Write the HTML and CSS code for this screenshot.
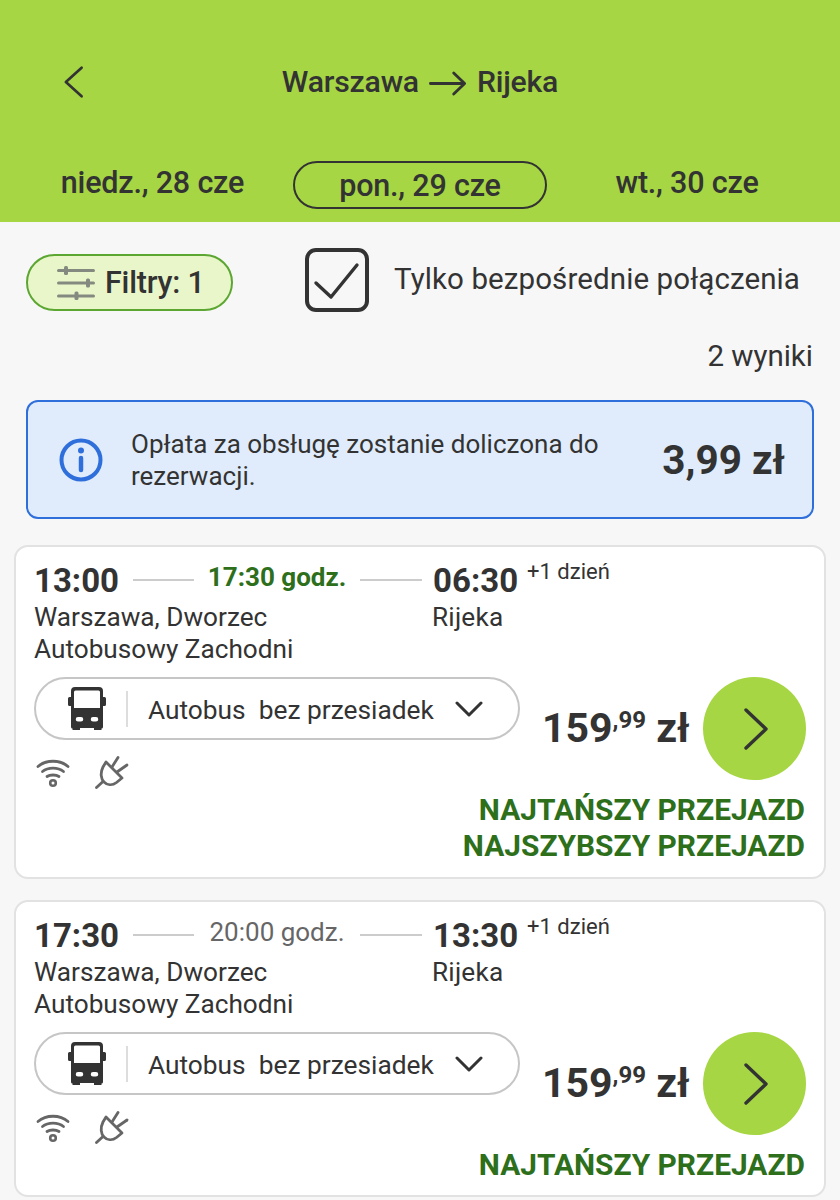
FILE: index.html
```html
<!DOCTYPE html>
<html lang="pl">
<head>
<meta charset="utf-8">
<title>Warszawa - Rijeka</title>
<link rel="stylesheet" href="styles.css">
</head>
<body>
<svg class="defs" width="0" height="0" aria-hidden="true">
  <symbol id="bus" viewBox="0 0 38 44">
    <path fill="#333" fill-rule="evenodd" d="M7 0h24a4 4 0 0 1 4 4v6h1.500a1.500 1.500 0 0 1 1.500 1.500v6a1.500 1.500 0 0 1-1.500 1.500H35v21a1.500 1.500 0 0 1-1.500 1.500V43H26v-2H12v2H4.500v-1.500A1.500 1.500 0 0 1 3 40V19H1.500A1.500 1.500 0 0 1 0 17.500v-6A1.500 1.500 0 0 1 1.500 10H3V4a4 4 0 0 1 4-4ZM7.500 3.500A1.500 1.500 0 0 0 6 5V21h26V5a1.500 1.500 0 0 0-1.500-1.500ZM10 30a2 2 0 0 0 0 4.500h3a2 2 0 0 0 0-4.500Zm15 0a2 2 0 0 0 0 4.500h3a2 2 0 0 0 0-4.500Z"/>
  </symbol>
  <symbol id="wifi" viewBox="0 0 34 32">
    <g fill="none" stroke="#666" stroke-width="2.800" stroke-linecap="round">
      <path d="M2 9.500C10 2.500 24 2.500 32 9.500"/>
      <path d="M6.500 14.500C12 10 22 10 27.500 14.500"/>
      <path d="M11 19.500C14 17.500 20 17.500 23 19.500"/>
    </g>
    <circle cx="17" cy="26" r="2.800" fill="none" stroke="#666" stroke-width="2.600"/>
  </symbol>
  <symbol id="plug" viewBox="0 0 34 34">
    <g fill="none" stroke="#666" stroke-width="2.800" stroke-linecap="round" stroke-linejoin="round">
      <path d="M1.500 31.500 8 25.500"/>
      <path d="M11 6 27 22 21.500 26.500C17 30 12 29 9 26 6 23 5 17 8 11Z"/>
      <path d="M17 11 23 1.500"/>
      <path d="M22 16 32 9"/>
    </g>
  </symbol>
  <symbol id="go" viewBox="0 0 26 44">
    <path d="M3 3 23 22 3 41" fill="none" stroke="#333" stroke-width="3.400" stroke-linecap="round" stroke-linejoin="round"/>
  </symbol>
  <symbol id="down" viewBox="0 0 28 16">
    <path d="M2 2 14 14 26 2" fill="none" stroke="#333" stroke-width="3" stroke-linecap="round" stroke-linejoin="round"/>
  </symbol>
</svg>

<header class="header">
  <div class="title-row">
    <svg class="back" viewBox="0 0 22 34" aria-hidden="true"><path d="M19.500 2 3 17 19.500 32" fill="none" stroke="#333" stroke-width="2.800" stroke-linecap="round" stroke-linejoin="round"/></svg>
    <h1 class="title"><span>Warszawa</span>
      <svg class="arrow" viewBox="0 0 40 26" aria-hidden="true"><path d="M1.500 13H37M26 2 37.500 13 26 24" fill="none" stroke="#333" stroke-width="3" stroke-linecap="round" stroke-linejoin="round"/></svg>
      <span>Rijeka</span></h1>
  </div>
  <div class="dates">
    <span class="date">niedz., 28 cze</span>
    <span class="date date-active">pon., 29 cze</span>
    <span class="date">wt., 30 cze</span>
  </div>
</header>

<main class="content">
  <div class="filters">
    <button class="filter-btn">
      <svg class="sliders" viewBox="0 0 38 34" aria-hidden="true">
        <g fill="none" stroke="#858a80" stroke-width="3" stroke-linecap="round">
          <path d="M1.500 4.500H36.500M1.500 17H36.500M1.500 30H36.500"/>
        </g>
        <g fill="#858a80"><rect x="7" y="0" width="4" height="9" rx="1.500"/><rect x="29" y="12.500" width="4" height="9" rx="1.500"/><rect x="17.500" y="25.500" width="4" height="8.500" rx="1.500"/></g>
      </svg>
      Filtry: 1
    </button>
    <div class="direct">
      <span class="checkbox">
        <svg viewBox="0 0 56 56" aria-hidden="true"><path d="M7 31 22 45 48 13" fill="none" stroke="#333" stroke-width="3.400" stroke-linecap="round" stroke-linejoin="round"/></svg>
      </span>
      <span class="direct-label">Tylko bezpośrednie połączenia</span>
    </div>
  </div>

  <div class="count">2 wyniki</div>

  <div class="notice">
    <svg class="info" viewBox="0 0 44 44" aria-hidden="true">
      <circle cx="22" cy="22" r="19.500" fill="none" stroke="#2f6fdb" stroke-width="4"/>
      <circle cx="22" cy="12.500" r="3" fill="#2f6fdb"/>
      <path d="M22 20V32" stroke="#2f6fdb" stroke-width="4.500" stroke-linecap="round"/>
    </svg>
    <p class="notice-text">Opłata za obsługę zostanie doliczona do rezerwacji.</p>
    <strong class="notice-price">3,99 zł</strong>
  </div>

  <article class="card card-first">
    <div class="times">
      <span class="time">13:00</span>
      <span class="line line-a"></span>
      <span class="duration duration-best">17:30 godz.</span>
      <span class="line line-b"></span>
      <span class="time">06:30</span>
      <span class="plus">+1 dzień</span>
    </div>
    <div class="places">
      <span class="place-from">Warszawa, Dworzec Autobusowy Zachodni</span>
      <span class="place-to">Rijeka</span>
    </div>
    <div class="buy">
      <div class="buy-left">
        <div class="transport">
          <svg class="bus"><use href="#bus"/></svg>
          <span class="sep"></span>
          <span class="transport-text">Autobus&nbsp; bez przesiadek</span>
          <svg class="down"><use href="#down"/></svg>
        </div>
        <div class="amenities">
          <svg class="wifi"><use href="#wifi"/></svg>
          <svg class="plug"><use href="#plug"/></svg>
        </div>
      </div>
      <div class="price">159<sup class="cents">,99</sup> zł</div>
      <span class="go"><svg class="go-icon"><use href="#go"/></svg></span>
    </div>
    <div class="tags">
      <span>NAJTAŃSZY PRZEJAZD</span>
      <span>NAJSZYBSZY PRZEJAZD</span>
    </div>
  </article>

  <article class="card">
    <div class="times">
      <span class="time">17:30</span>
      <span class="line line-a"></span>
      <span class="duration">20:00 godz.</span>
      <span class="line line-b"></span>
      <span class="time">13:30</span>
      <span class="plus">+1 dzień</span>
    </div>
    <div class="places">
      <span class="place-from">Warszawa, Dworzec Autobusowy Zachodni</span>
      <span class="place-to">Rijeka</span>
    </div>
    <div class="buy">
      <div class="buy-left">
        <div class="transport">
          <svg class="bus"><use href="#bus"/></svg>
          <span class="sep"></span>
          <span class="transport-text">Autobus&nbsp; bez przesiadek</span>
          <svg class="down"><use href="#down"/></svg>
        </div>
        <div class="amenities">
          <svg class="wifi"><use href="#wifi"/></svg>
          <svg class="plug"><use href="#plug"/></svg>
        </div>
      </div>
      <div class="price">159<sup class="cents">,99</sup> zł</div>
      <span class="go"><svg class="go-icon"><use href="#go"/></svg></span>
    </div>
    <div class="tags">
      <span>NAJTAŃSZY PRZEJAZD</span>
    </div>
  </article>
</main>
</body>
</html>
```
FILE: styles.css
```css
* { box-sizing: border-box; }
html, body { margin: 0; padding: 0; }
body {
  height: 1200px;
  overflow: hidden;
  background: #f7f7f7;
  color: #333;
  font-family: Roboto, "Liberation Sans", sans-serif;
}
.defs { position: absolute; }

.header { height: 222px; background: #a6d643; display: flex; flex-direction: column; }
.title-row { height: 161px; padding: 64px 0 0 63px; display: flex; align-items: flex-start; position: relative; }
.back { width: 21px; height: 36px; }
.title {
  position: absolute; left: 0; right: 0; top: 64px; margin: 0;
  display: flex; justify-content: center; align-items: center; gap: 10px;
  font-size: 30.2px; line-height: 36px; font-weight: 500; letter-spacing: -0.2px;
}
.arrow { width: 38px; height: 25px; margin: 3px 0 0; }
.dates { display: grid; grid-template-columns: 293px 254px 293px; align-items: start; }
.date { font-size: 30.5px; line-height: 44px; font-weight: 500; text-align: center; letter-spacing: -0.2px; }
.date-active { height: 48px; border: 2px solid #333; border-radius: 24px; line-height: 45px; }
.date:first-child { padding-left: 12px; }
.date:last-child { padding-right: 13px; }

.content { padding: 0 14px; }
.filters { height: 90px; padding: 26px 0 0 12px; display: flex; align-items: flex-start; }
.filter-btn {
  width: 207px; height: 57px; margin-top: 6px; padding: 0 0 0 29px;
  display: flex; align-items: center; gap: 10px;
  background: #e9f6c9; border: 2px solid #5ca632; border-radius: 29px;
  font: 500 30.5px Roboto, sans-serif; color: #333; letter-spacing: -0.2px;
}
.sliders { width: 38px; height: 34px; flex: none; }
.direct { display: flex; align-items: center; margin-left: 72px; gap: 25px; }
.checkbox { width: 64px; height: 64px; border: 4px solid #333; border-radius: 11px; display: block; }
.checkbox svg { display: block; width: 100%; height: 100%; }
.direct-label { font-size: 29.5px; line-height: 36px; letter-spacing: 0.1px; margin-top: -2px; white-space: nowrap; }
.count { margin: 26px 13px 0 0; text-align: right; font-size: 29.5px; line-height: 36px; }

.notice {
  margin: 26px 12px 0 12px; height: 119px; padding: 0 27px 0 31px;
  display: flex; align-items: center;
  background: #e0ecfb; border: 2px solid #2f6fdb; border-radius: 12px;
}
.info { width: 44px; height: 44px; flex: none; }
.notice-text { margin: 0 0 0 28px; width: 490px; font-size: 26px; line-height: 32px; flex: none; }
.notice-price { margin-left: auto; font-size: 40.5px; font-weight: 700; white-space: nowrap; }

.card {
  margin-top: 21px; padding: 12px 18px 0; background: #fff;
  border: 2px solid #e2e2e2; border-radius: 14px; height: 297px;
}
.card-first { margin-top: 26px; height: 334px; }
.times { display: flex; align-items: flex-start; height: 42px; }
.time { font-size: 33px; line-height: 44px; font-weight: 700; white-space: nowrap; }
.line { height: 2px; background: #ccc; margin-top: 20px; }
.line-a { width: 61px; margin-left: 14px; }
.line-b { width: 62px; margin-right: 11px; }
.duration { width: 166px; text-align: center; font-size: 26px; line-height: 36px; color: #666; white-space: nowrap; }
.duration-best { color: #2e6f1c; font-weight: 700; }
.plus { font-size: 22px; line-height: 26px; margin-left: 9px; white-space: nowrap; }
.places { display: flex; }
.place-from { width: 398px; font-size: 26.2px; line-height: 32px; padding-right: 100px; }
.place-to { font-size: 26.2px; line-height: 32px; letter-spacing: 0.2px; }

.buy { display: flex; align-items: flex-start; margin-top: 12px; }
.buy-left { width: 486px; flex: none; }
.transport {
  height: 63px; display: flex; align-items: center; padding: 0 34px 0 32px;
  border: 2px solid #c6c6c6; border-radius: 32px; background: #fff;
}
.bus { width: 38px; height: 44px; flex: none; }
.sep { width: 2px; height: 36px; background: #ddd; margin: 0 20px 0 20px; flex: none; }
.transport-text { font-size: 26.3px; white-space: nowrap; margin-top: 2px; }
.down { width: 28px; height: 16px; margin-left: 21px; flex: none; }
.amenities { display: flex; align-items: center; gap: 25px; padding: 16px 0 0 2px; }
.wifi { width: 34px; height: 32px; }
.plug { width: 34px; height: 34px; }
.price { margin: 25px 0 0 22px; width: 161px; font-size: 41px; line-height: 52px; font-weight: 700; white-space: nowrap; }
.cents { font-size: 24px; line-height: 0; vertical-align: 14px; }
.go { width: 103px; height: 103px; border-radius: 50%; background: #a6d643; display: flex; align-items: center; justify-content: center; flex: none; }
.go-icon { width: 26px; height: 44px; margin-left: 2px; }
.tags { display: flex; flex-direction: column; align-items: flex-end; margin-top: 2px; padding-right: 1px; font-size: 29.9px; line-height: 36px; font-weight: 700; color: #2e6f1c; white-space: nowrap; }
```
